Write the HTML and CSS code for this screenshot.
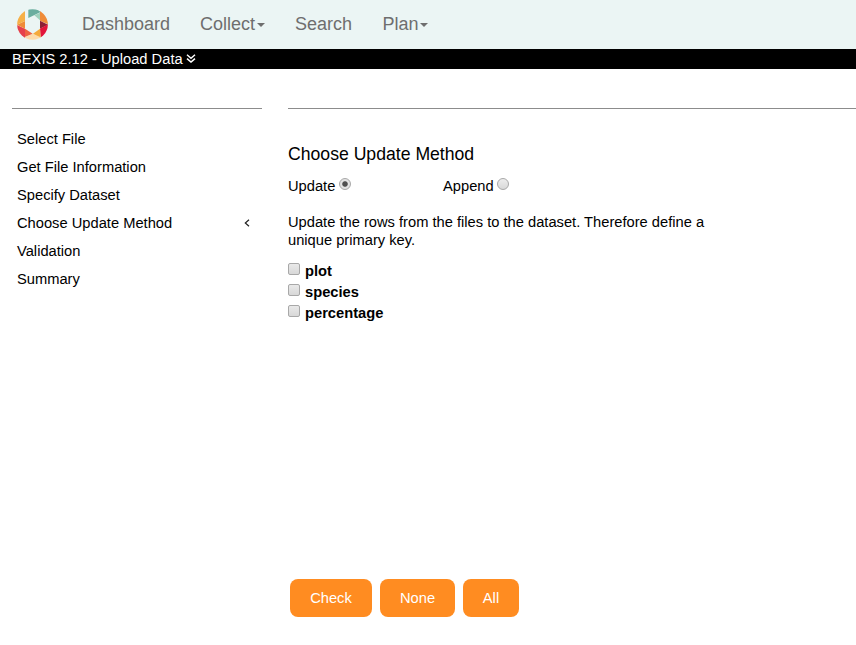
FILE: index.html
```html
<!DOCTYPE html>
<html lang="en">
<head>
<meta charset="utf-8">
<title>BEXIS 2.12 - Upload Data</title>
<link rel="stylesheet" href="styles.css">
</head>
<body>
<nav class="navbar">
  <svg class="logo" viewBox="50 25 93 93" aria-hidden="true">
    <clipPath id="disc"><circle cx="96.5" cy="71.5" r="46"/></clipPath>
    <g clip-path="url(#disc)">
      <path fill="#6aae9f" d="M84 22H106L121 34L84 52Z"/>
      <path fill="#a0d2bd" d="M102 44L119 36V59Z"/>
      <path fill="#ef8b38" d="M119 28L146 50V72L119 60Z"/>
      <path fill="#8d1f35" d="M119 60L143 72L119 84Z"/>
      <path fill="#e2143a" d="M143 71V110H121L119 84Z"/>
      <path fill="#f5aa3c" d="M119 84L121 116L98 99Z"/>
      <path fill="#fddbaa" d="M70 120L75 109L98 99L121 110V120Z"/>
      <path fill="#ee6340" d="M74 84L97 99L73 109Z"/>
      <path fill="#e6404b" d="M48 72L74 84V112L48 110Z"/>
      <path fill="#ef8b38" d="M50 72L74 61V84Z"/>
      <path fill="#f6b047" d="M48 73V25H74V61Z"/>
    </g>
  </svg>
  <a class="nav-dashboard">Dashboard</a>
  <a class="nav-collect">Collect<i class="caret"></i></a>
  <a class="nav-search">Search</a>
  <a>Plan<i class="caret"></i></a>
</nav>
<header class="titlebar">
  <span>BEXIS 2.12 - Upload Data</span>
  <svg class="expand" viewBox="0 0 10 9" aria-hidden="true"><path d="M1 .8L5 4.2L9 .8M1 4.6L5 8L9 4.6"/></svg>
</header>
<div class="layout">
  <ul class="steps">
    <li>Select File</li>
    <li>Get File Information</li>
    <li>Specify Dataset</li>
    <li>Choose Update Method
      <svg class="current" viewBox="0 0 6 8" aria-hidden="true"><path d="M5 .7L1.3 4L5 7.3"/></svg>
    </li>
    <li>Validation</li>
    <li>Summary</li>
  </ul>
  <main class="content">
    <h1>Choose Update Method</h1>
    <div class="methods">
      <label>Update<i class="radio checked"></i></label>
      <label>Append<i class="radio"></i></label>
    </div>
    <p>Update the rows from the files to the dataset. Therefore define a unique primary key.</p>
    <div class="keys">
      <label><i class="checkbox"></i>plot</label>
      <label><i class="checkbox"></i>species</label>
      <label><i class="checkbox"></i>percentage</label>
    </div>
    <div class="actions">
      <button class="check">Check</button>
      <button class="none">None</button>
      <button class="all">All</button>
    </div>
  </main>
</div>
</body>
</html>
```
FILE: styles.css
```css
* { box-sizing: border-box; }
body {
  margin: 0;
  height: 645px;
  overflow: hidden;
  background: #fff;
  color: #000;
  font: 14.7px/18px "Liberation Sans", Arial, sans-serif;
}
.navbar {
  display: flex;
  align-items: center;
  height: 49px;
  padding: 0 0 1px 17px;
  background: #ebf5f4;
  color: #6e6e6e;
  font-size: 18px;
  line-height: 20px;
}
.logo { width: 31px; height: 31px; margin-right: 34px; }
.navbar a { display: flex; align-items: center; margin-right: 30px; }
.nav-dashboard { width: 88px; }
.nav-collect { width: 65px; }
.nav-search { width: 57.4px; }
.caret {
  margin: 2px 0 0 2px;
  border: 4px solid transparent;
  border-top-color: currentColor;
  border-bottom: 0;
}
.titlebar {
  display: flex;
  align-items: center;
  height: 20px;
  padding-left: 12px;
  background: #000;
  color: #fff;
}
.titlebar span { width: 171px; white-space: nowrap; }
.expand { width: 10px; height: 9px; margin: 0 0 2px 3px; fill: none; stroke: #fff; stroke-width: 1.5; }
.layout {
  display: grid;
  grid-template-columns: 250px 1fr;
  column-gap: 26px;
  padding: 39px 0 0 12px;
}
.steps {
  height: 188px;
  margin: 0;
  padding: 16px 12px 0 5px;
  border-top: 1px solid #8c8c8c;
  list-style: none;
}
.steps li {
  display: flex;
  align-items: center;
  justify-content: space-between;
  height: 28px;
}
.current { width: 6px; height: 8px; fill: none; stroke: #222; stroke-width: 1.2; }
.content { border-top: 1px solid #8c8c8c; }
h1 { margin: 35px 0 0; font-size: 17.64px; font-weight: 400; line-height: 20px; }
.methods { display: flex; margin-top: 13px; }
.methods label { display: flex; width: 155px; }
.radio {
  width: 12px;
  height: 12px;
  margin: 1px 0 0 3.4px;
  border: 1px solid #a8a8a8;
  border-radius: 50%;
  background: linear-gradient(#ededed, #d9d9d9);
}
.checked { margin-left: 4px; background: radial-gradient(circle, #505050 2.3px, #e3e3e3 3.2px); }
p { width: 430px; margin: 18px 0 0; }
.keys { margin-top: 12px; font-weight: 700; line-height: 21px; }
.keys label { display: flex; height: 21px; }
.checkbox {
  width: 12px;
  height: 12px;
  margin: 2px 5px 0 0;
  border: 1px solid #a8a8a8;
  border-radius: 2px;
  background: linear-gradient(#e9e9e9, #d8d8d8);
}
.actions { display: flex; gap: 8px; margin: 255px 0 0 2px; }
button {
  height: 38px;
  padding: 0;
  border: 0;
  border-radius: 8px;
  background: #ff8c21;
  color: #fff;
  font: inherit;
}
.check { width: 82px; }
.none { width: 75px; }
.all { width: 56px; }
```
